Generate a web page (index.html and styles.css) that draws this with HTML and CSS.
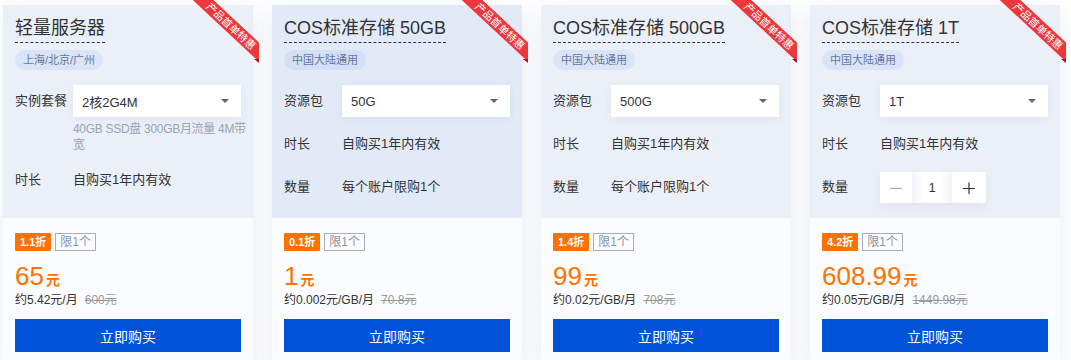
FILE: index.html
```html
<!DOCTYPE html>
<html lang="zh-CN">
<head>
<meta charset="utf-8">
<title>产品首单特惠</title>
<link rel="stylesheet" href="styles.css">
</head>
<body>
<div class="cards">

  <div class="card">
    <div class="ribbon"><span class="ribbon-band">产品首单特惠</span><i class="ribbon-fold"></i></div>
    <div class="card-top">
      <div class="title">轻量服务器</div>
      <div class="region">上海/北京/广州</div>
      <div class="rows">
        <div class="row">
          <span class="label">实例套餐</span>
          <div class="field">
            <div class="select"><span>2核2G4M</span><i class="caret"></i></div>
            <div class="hint">40GB SSD盘 300GB月流量 4M带宽</div>
          </div>
        </div>
        <div class="row"><span class="label">时长</span><span class="value">自购买1年内有效</span></div>
      </div>
    </div>
    <div class="card-bottom">
      <div class="tags"><span class="tag-discount">1.1折</span><span class="tag-limit">限1个</span></div>
      <div class="price"><span class="num">65</span><span class="unit">元</span></div>
      <div class="sub">约5.42元/月<s>600元</s></div>
      <button class="buy">立即购买</button>
    </div>
  </div>

  <div class="card card--active">
    <div class="ribbon"><span class="ribbon-band">产品首单特惠</span><i class="ribbon-fold"></i></div>
    <div class="card-top">
      <div class="title">COS标准存储 50GB</div>
      <div class="region">中国大陆通用</div>
      <div class="rows">
        <div class="row">
          <span class="label">资源包</span>
          <div class="field"><div class="select"><span>50G</span><i class="caret"></i></div></div>
        </div>
        <div class="row"><span class="label">时长</span><span class="value">自购买1年内有效</span></div>
        <div class="row"><span class="label">数量</span><span class="value">每个账户限购1个</span></div>
      </div>
    </div>
    <div class="card-bottom">
      <div class="tags"><span class="tag-discount">0.1折</span><span class="tag-limit">限1个</span></div>
      <div class="price"><span class="num">1</span><span class="unit">元</span></div>
      <div class="sub">约0.002元/GB/月<s>70.8元</s></div>
      <button class="buy">立即购买</button>
    </div>
  </div>

  <div class="card">
    <div class="ribbon"><span class="ribbon-band">产品首单特惠</span><i class="ribbon-fold"></i></div>
    <div class="card-top">
      <div class="title">COS标准存储 500GB</div>
      <div class="region">中国大陆通用</div>
      <div class="rows">
        <div class="row">
          <span class="label">资源包</span>
          <div class="field"><div class="select"><span>500G</span><i class="caret"></i></div></div>
        </div>
        <div class="row"><span class="label">时长</span><span class="value">自购买1年内有效</span></div>
        <div class="row"><span class="label">数量</span><span class="value">每个账户限购1个</span></div>
      </div>
    </div>
    <div class="card-bottom">
      <div class="tags"><span class="tag-discount">1.4折</span><span class="tag-limit">限1个</span></div>
      <div class="price"><span class="num">99</span><span class="unit">元</span></div>
      <div class="sub">约0.02元/GB/月<s>708元</s></div>
      <button class="buy">立即购买</button>
    </div>
  </div>

  <div class="card">
    <div class="ribbon"><span class="ribbon-band">产品首单特惠</span><i class="ribbon-fold"></i></div>
    <div class="card-top">
      <div class="title">COS标准存储 1T</div>
      <div class="region">中国大陆通用</div>
      <div class="rows">
        <div class="row">
          <span class="label">资源包</span>
          <div class="field"><div class="select"><span>1T</span><i class="caret"></i></div></div>
        </div>
        <div class="row"><span class="label">时长</span><span class="value">自购买1年内有效</span></div>
        <div class="row">
          <span class="label">数量</span>
          <div class="stepper">
            <span class="step step-minus"><svg width="12" height="12" viewBox="0 0 12 12"><path d="M0 6.5h12" stroke="#a3a8b3" stroke-width="1.2"/></svg></span>
            <span class="step step-num">1</span>
            <span class="step step-plus"><svg width="12" height="12" viewBox="0 0 12 12"><path d="M0 6.5h12M6 0.5v12" stroke="#333" stroke-width="1.2"/></svg></span>
          </div>
        </div>
      </div>
    </div>
    <div class="card-bottom">
      <div class="tags"><span class="tag-discount">4.2折</span><span class="tag-limit">限1个</span></div>
      <div class="price"><span class="num">608.99</span><span class="unit">元</span></div>
      <div class="sub">约0.05元/GB/月<s>1449.98元</s></div>
      <button class="buy">立即购买</button>
    </div>
  </div>

</div>
</body>
</html>
```

FILE: styles.css
```css
html, body {
  margin: 0;
  padding: 0;
  background: #ffffff;
  overflow: hidden;
}

body {
  font-family: "Liberation Sans", "Noto Sans CJK SC", sans-serif;
  color: #333;
}

.cards {
  display: grid;
  grid-template-columns: repeat(4, 250px);
  column-gap: 19px;
  padding: 5px 0 0 3px;
}

.card {
  position: relative;
  display: flex;
  flex-direction: column;
  background: #fbfcfe;
  box-shadow: 0 6px 24px rgba(40, 80, 150, 0.10);
}

/* ribbon */
.ribbon {
  position: absolute;
  top: -5px;
  right: -6px;
  width: 66px;
  height: 64px;
  overflow: hidden;
  z-index: 2;
}

.ribbon-band {
  position: absolute;
  left: -12px;
  top: 19px;
  width: 100px;
  height: 14px;
  background: #ec383d;
  color: #fff;
  font-size: 10.5px;
  line-height: 14px;
  text-align: center;
  transform: rotate(43deg);
  white-space: nowrap;
}

.ribbon-fold {
  position: absolute;
  right: 0;
  top: 59px;
  width: 0;
  height: 0;
  border-left: 5px solid transparent;
  border-top: 4px solid #9e1a1e;
}

/* top area */
.card-top {
  flex: 1;
  display: flex;
  flex-direction: column;
  align-items: flex-start;
  background: #ebeff7;
  padding: 11px 12px 15px;
}

.card--active .card-top {
  background: #e2eaf8;
}

.title {
  font-size: 18px;
  line-height: 24px;
  padding-bottom: 2px;
  border-bottom: 1px dashed #333;
  color: #333;
}

.region {
  margin-top: 7px;
  height: 20px;
  padding: 0 8px;
  border-radius: 10px;
  background: #d9e4f8;
  color: #66779b;
  font-size: 11px;
  line-height: 20px;
}

.card--active .region {
  background: #d2dff7;
}

.rows {
  align-self: stretch;
  margin-top: 15px;
  display: flex;
  flex-direction: column;
  gap: 11px;
}

.row {
  display: flex;
  align-items: flex-start;
}

.label {
  flex: 0 0 58px;
  font-size: 13px;
  line-height: 32px;
  color: #333;
}

.value {
  font-size: 13px;
  line-height: 32px;
  color: #333;
}

.field {
  flex: 1;
  min-width: 0;
}

.select {
  height: 32px;
  display: flex;
  align-items: center;
  justify-content: space-between;
  padding: 0 12px 0 9px;
  background: #fff;
  box-shadow: 0 2px 8px rgba(30, 60, 120, 0.06);
  font-size: 13px;
  color: #333;
}

.caret {
  width: 0;
  height: 0;
  border-left: 4px solid transparent;
  border-right: 4px solid transparent;
  border-top: 4px solid #666;
}

.hint {
  margin-top: 4px;
  margin-right: -8px;
  font-size: 12px;
  line-height: 16px;
  letter-spacing: -0.3px;
  color: #9aa3b4;
}

.stepper {
  display: flex;
  height: 31px;
  margin-top: 1px;
  box-shadow: 0 4px 10px rgba(30, 60, 120, 0.06);
}

.step {
  display: flex;
  align-items: center;
  justify-content: center;
  background: #fff;
  height: 31px;
}

.step-minus { width: 32px; }
.step-num {
  width: 40px;
  font-size: 13px;
  color: #333;
  background: linear-gradient(90deg, #f3f5f9, #fff 30%, #fff 70%, #f3f5f9);
}
.step-plus { width: 34px; }

/* bottom area */
.card-bottom {
  padding: 15px 12px 14px;
  background: #fbfcfe;
}

.tags {
  display: flex;
  gap: 4px;
  height: 18px;
}

.tag-discount {
  background: #ff7200;
  color: #fff;
  font-size: 11px;
  font-weight: bold;
  line-height: 18px;
  padding: 0 5px;
  border-radius: 1px;
}

.tag-limit {
  border: 1px solid #a5adbc;
  color: #8a93a5;
  font-size: 12px;
  line-height: 16px;
  padding: 0 4px;
}

.price {
  margin-top: 9px;
  height: 32px;
  font-size: 26px;
  line-height: 32px;
  color: #ff7200;
}

.unit {
  font-size: 14px;
  line-height: 1;
  font-weight: bold;
  margin-left: 2px;
}

.sub {
  font-size: 12px;
  line-height: 16px;
  color: #333;
}

.sub s {
  margin-left: 7px;
  color: #999;
}

.buy {
  display: block;
  width: 100%;
  height: 33px;
  margin-top: 11px;
  border: none;
  background: #0052d9;
  color: #fff;
  font-family: inherit;
  font-size: 14px;
  cursor: pointer;
}
```
